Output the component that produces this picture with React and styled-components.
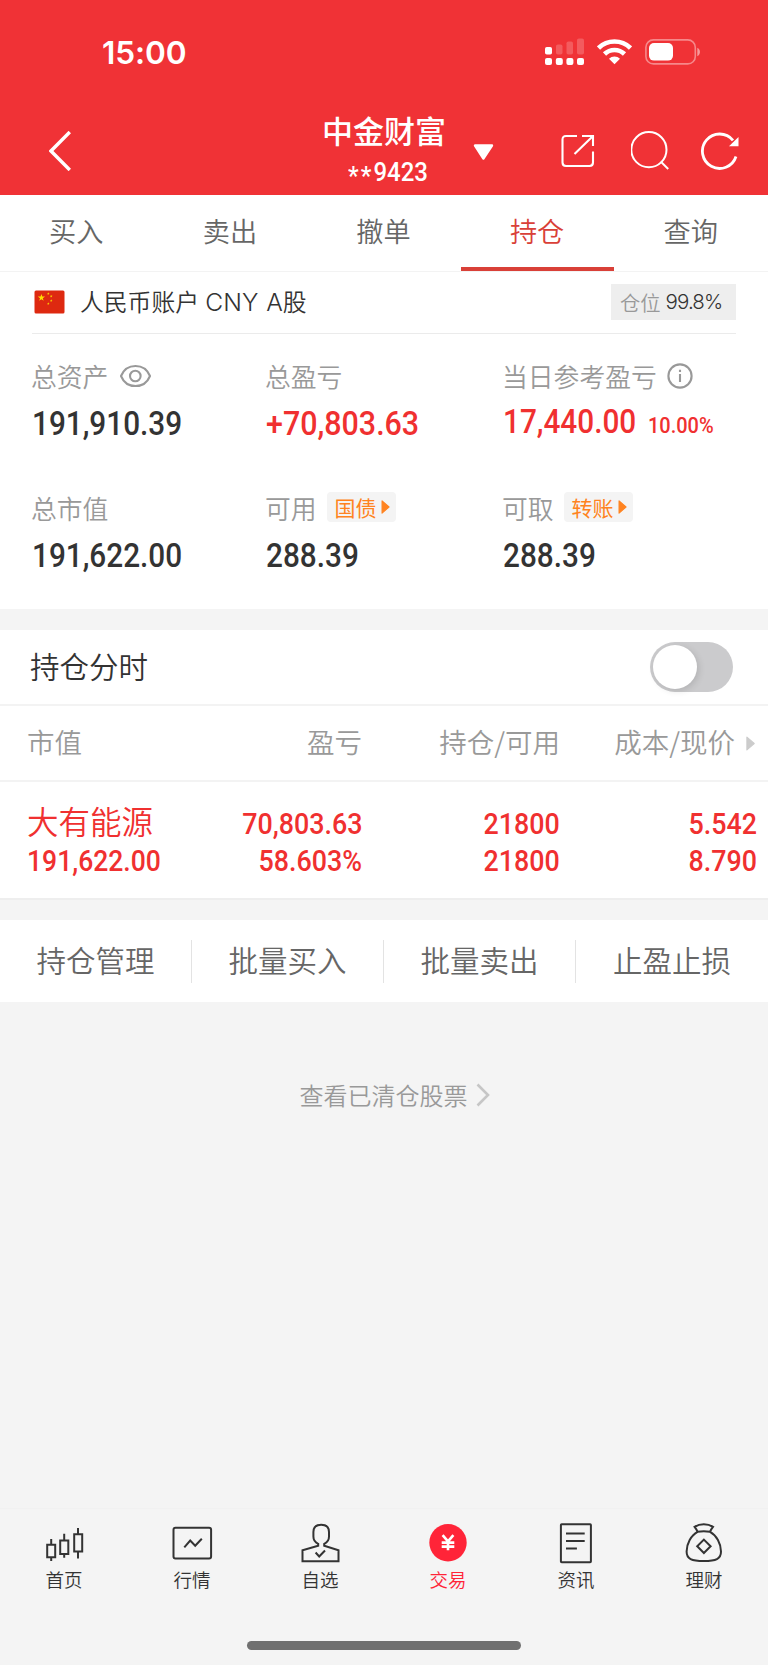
import styled, { createGlobalStyle } from "styled-components"

const GlobalStyle = createGlobalStyle`
    * {
        box-sizing: border-box;
    }

    body {
        margin: 0;
        background: #f4f4f4;
        font-family: "Noto Sans CJK SC", "Noto Sans", sans-serif;
        font-weight: 350;
        color: #333;
    }

    svg {
        display: block;
        flex: none;
    }
`

const Screen = styled.div`
    display: flex;
    flex-direction: column;

    width: 768px;
    height: 1665px;
    overflow: hidden;

    background-color: #f4f4f4;
`

/* narrow figures, used for every amount */
const Num = styled.span`
    display: inline-block;

    font-family: Roboto, sans-serif;
    font-size: ${props => props.$size || 33.8}px;
    font-weight: 500;
    line-height: 1;
    white-space: nowrap;

    transform: scaleX(${props => props.$sx || 0.88});
    transform-origin: ${props => props.$origin || "left"} center;
`

const Rate = styled(Num)`
    margin-left: -6px;
`

const Header = styled.header`
    height: 195px;
    flex: none;

    background-color: #f03236;
    color: #fff;
`

const StatusBar = styled.div`
    display: flex;
    align-items: center;

    height: 104px;
    padding: 0 67px 0 102px;
`

const Clock = styled.span`
    flex: 1;

    font-family: Inter, sans-serif;
    font-size: 31.6px;
    font-weight: 600;
    letter-spacing: -0.1px;
`

const StatusIcons = styled.div`
    display: flex;
    align-items: center;
    gap: 13px;
`

const NavBar = styled.div`
    display: grid;
    grid-template-columns: 274px 122px 28px 88px 70px 70px 38px;
    align-items: center;

    height: 91px;
    padding: 2px 0 0 49px;
`

const Account = styled.div`
    display: flex;
    flex-direction: column;
    align-items: center;
`

const Broker = styled.div`
    font-size: 31px;
    font-weight: 500;
    line-height: 38px;
    white-space: nowrap;
`

const AccountNo = styled.div`
    display: flex;
    align-items: center;

    height: 42px;
    margin-left: 8px;
    padding-top: 10px;
`

const Stars = styled.span`
    letter-spacing: 2.2px;
    vertical-align: -4px;
`

const Tabs = styled.nav`
    display: grid;
    grid-template-columns: repeat(5, 1fr);

    height: 77px;
    flex: none;

    background-color: #fff;
    border-bottom: 1px solid #f3f3f3;
`

const Tab = styled.div`
    padding: 15px 1px 0 0;

    font-size: 27.2px;
    line-height: 40px;
    text-align: center;
    color: ${props => props.$active ? "#d94038" : "#666"};

    border-bottom: 4px solid ${props => props.$active ? "#d94038" : "transparent"};
`

const Panel = styled.section`
    flex: none;
    height: ${props => props.$height}px;
    padding: 0 32px;

    background-color: #fff;
`

const AccountRow = styled.div`
    display: flex;
    align-items: center;

    height: 62px;
    padding: 0 0 2px 2px;

    border-bottom: 1px solid #ebebeb;
`

const AccountName = styled.div`
    flex: 1;
    margin-left: 15px;

    font-size: 23.8px;
    line-height: 34px;
    word-spacing: 1px;

    span {
        font-family: Inter, sans-serif;
        font-size: 24.6px;
        font-weight: 300;
    }
`

const Position = styled.div`
    display: flex;
    align-items: center;
    gap: 5px;

    width: 125px;
    height: 36px;
    padding-left: 9px;

    background-color: #eee;
    font-size: 20.3px;
    color: #999;

    span {
        font-family: Inter, sans-serif;
        font-size: 20.5px;
        font-weight: 300;
        letter-spacing: -0.9px;
        color: #333;
    }
`

const Summary = styled.div`
    display: grid;
    grid-template-columns: 234px 237px 1fr;
    grid-template-rows: 132px 120px;

    padding-top: 24px;
`

const Label = styled.div`
    display: flex;
    align-items: center;

    height: 34px;
    margin-left: -1px;

    font-size: 25.8px;
    white-space: nowrap;
    color: #999;
`

const Value = styled.div`
    display: flex;
    align-items: baseline;

    margin-top: ${props => props.$top || 15}px;
    color: ${props => props.$up ? "#f03030" : "#333"};
`

const Chip = styled.span`
    display: flex;
    align-items: center;
    gap: 4px;

    height: 30px;
    margin: 0 0 0 10px;
    padding: 0 6px 0 8px;

    border-radius: 4px;
    background-color: #f4f4f4;
    font-size: 21px;
    font-weight: 400;
    line-height: 28px;
    color: #ff8320;
`

const Gap = styled.div`
    flex: none;
    height: ${props => props.$height}px;
    border-top: 2px solid ${props => props.$line || "#f4f4f4"};
`

const SwitchRow = styled.div`
    display: flex;
    align-items: center;
    justify-content: space-between;

    height: 76px;
    flex: none;
    padding: 0 35px 0 30px;

    background-color: #fff;
    border-bottom: 2px solid #f3f3f3;
`

const SwitchLabel = styled.span`
    padding-bottom: 4px;
    font-size: 29.5px;
`

const Switch = styled.div`
    width: 83px;
    height: 50px;
    padding: 3px;

    border-radius: 25px;
    background-color: #cbcbcd;
`

const Knob = styled.div`
    width: 44px;
    height: 44px;

    border-radius: 50%;
    background-color: #fff;
    box-shadow: 2px 2px 7px rgb(0 0 0 / 12%);
`

const Columns = styled.div`
    display: grid;
    grid-template-columns: 170px 165px 198px 197px;

    flex: none;
    height: ${props => props.$height}px;
    padding-left: 27px;

    background-color: #fff;
`

const HeadColumns = styled(Columns)`
    align-items: center;

    padding-bottom: 4px;
    border-bottom: 2px solid #f3f3f3;
    font-size: 27.5px;
    line-height: 40px;
    white-space: nowrap;
    color: #999;

    svg {
        margin: 5px 2px 0 0;
    }
`

const Head = styled.div`
    display: flex;
    align-items: center;
    justify-content: ${props => props.$left ? "flex-start" : "flex-end"};
    gap: 11px;
`

const Cell = styled.div`
    display: flex;
    flex-direction: column;
    align-items: ${props => props.$left ? "flex-start" : "flex-end"};

    padding-top: 23px;
    color: #f03030;
`

const Line = styled.div`
    display: flex;
    align-items: center;

    height: 37px;
`

const Stock = styled(Line)`
    padding-bottom: 7px;

    font-size: 31.5px;
    white-space: nowrap;
`

const Actions = styled.div`
    display: grid;
    grid-template-columns: repeat(4, 1fr);
    align-items: center;

    flex: none;
    height: 82px;

    background-color: #fff;
`

const Action = styled.div`
    height: 43px;

    border-right: ${props => props.$last ? "none" : "1px solid #e3e3e3"};
    font-size: 29.5px;
    line-height: 39px;
    text-align: center;
    color: #666;
`

const ClearedLink = styled.div`
    display: flex;
    align-items: center;
    justify-content: center;
    gap: 8px;

    flex: none;
    height: 36px;
    margin-top: 75px;
    padding-left: 21px;

    font-size: 24px;
    line-height: 34px;
    color: #999;
`

const BottomBar = styled.footer`
    display: grid;
    grid-template-columns: repeat(6, 1fr);

    flex: none;
    height: 133px;
    margin-top: auto;
    padding-top: 12px;

    border-top: 1px solid #f1f1f1;
`

const BottomItem = styled.div`
    display: flex;
    flex-direction: column;
    align-items: center;

    font-size: 18.5px;
    line-height: 29px;
    color: ${props => props.$active ? "#ff2438" : "#333"};
`

const HomeIndicator = styled.div`
    flex: none;
    width: 274px;
    height: 9px;
    margin: 0 auto 15px 247px;

    border-radius: 5px;
    background-color: #707070;
`

const Signal = () => (
    <svg width="39" height="28" viewBox="0 0 39 28" fill="#fff">
        <rect x="0" y="9" width="7" height="7.5" rx="1.8" />
        <rect x="11" y="6.5" width="6.5" height="10" rx="1.8" opacity=".2" />
        <rect x="21.5" y="3.5" width="6.5" height="13" rx="1.8" opacity=".2" />
        <rect x="32" y="0.5" width="7" height="16" rx="1.8" opacity=".2" />
        {[0, 10.8, 21.4, 32].map(x => (
            <rect key={x} x={x} y="20" width="7" height="7" rx="2" />
        ))}
    </svg>
)

const Wifi = () => (
    <svg width="35" height="26" viewBox="0 0 35 26">
        <g fill="none" stroke="#fff" strokeWidth="4.6">
            <path d="M1.5 9 A23 23 0 0 1 33.5 9" />
            <path d="M7.5 15 A14.4 14.4 0 0 1 27.5 15" />
        </g>
        <path d="M17.5 25.3 L12 19.8 A8 8 0 0 1 23 19.8 Z" fill="#fff" />
    </svg>
)

const Battery = () => (
    <svg width="56" height="26" viewBox="0 0 56 26">
        <rect x="0.9" y="0.9" width="49.4" height="24" rx="7.5" fill="none" stroke="#fff" strokeOpacity=".42" strokeWidth="1.6" />
        <rect x="4" y="4" width="24" height="17.6" rx="5" fill="#fff" />
        <path d="M52.3 8.8 C55.8 10 55.8 16 52.3 17.2 Z" fill="#fff" opacity=".5" />
    </svg>
)

const BackIcon = () => (
    <svg width="22" height="40" viewBox="0 0 22 40" fill="none" stroke="#fff" strokeWidth="3.4">
        <path d="M20.8 1 L2 20 L20.8 39" />
    </svg>
)

const DropIcon = styled(({ className }) => (
    <svg className={className} width="21" height="17" viewBox="0 0 21 17">
        <path d="M2 1.5 H19 L10.4 14.5 Z" fill="#fff" stroke="#fff" strokeWidth="2.4" strokeLinejoin="round" />
    </svg>
))`
    margin-top: 3px;
`

const ShareIcon = () => (
    <svg width="34" height="34" viewBox="0 0 34 34" fill="none" stroke="#fff" strokeWidth="2.1">
        <path d="M16 2 H5 Q1.5 2 1.5 5.5 V28.5 Q1.5 32 5 32 H28.5 Q32 32 32 28.5 V17.5" />
        <path d="M21 2 H32 V12 M32 2 L13.5 20" />
    </svg>
)

const SearchIcon = () => (
    <svg width="40" height="40" viewBox="0 0 40 40" fill="none" stroke="#fff" strokeWidth="2">
        <circle cx="17.9" cy="18.7" r="17.6" />
        <path d="M29.7 30.5 L37.2 38" />
    </svg>
)

const RefreshIcon = () => (
    <svg width="38" height="39" viewBox="0 0 38 39">
        <path d="M35 25.5 A17.2 17.2 0 1 1 32 9.4" fill="none" stroke="#fff" strokeWidth="2.8" />
        <path d="M37.5 6 V15.3 H28 Z" fill="#fff" />
    </svg>
)

const STAR = "0,-1 .23,-.31 .95,-.31 .36,.12 .59,.81 0,.38 -.59,.81 -.36,.12 -.95,-.31 -.23,-.31"

const Flag = () => (
    <svg width="31" height="24" viewBox="0 0 31 24">
        <rect x="0.5" y="0.5" width="30" height="23" rx="1.5" fill="#de2910" />
        <g fill="#ffde00">
            <polygon points={STAR} transform="translate(7.4 7.7) scale(3.8)" />
            <polygon points={STAR} transform="translate(14.3 3.6) scale(1.4)" />
            <polygon points={STAR} transform="translate(17.2 6.3) scale(1.4)" />
            <polygon points={STAR} transform="translate(17.2 10.6) scale(1.4)" />
            <polygon points={STAR} transform="translate(14.3 13.6) scale(1.4)" />
        </g>
    </svg>
)

const EyeIcon = styled(({ className }) => (
    <svg className={className} width="31" height="24" viewBox="0 0 31 24" fill="none" stroke="#999" strokeWidth="2.1">
        <path d="M1 12 C6.5 -1.4 24.5 -1.4 30 12 C24.5 25.4 6.5 25.4 1 12 Z" strokeLinejoin="round" />
        <circle cx="15.3" cy="12" r="5.3" />
    </svg>
))`
    margin: 1px 0 0 12px;
`

const InfoIcon = styled(({ className }) => (
    <svg className={className} width="26" height="26" viewBox="0 0 26 26" fill="none" stroke="#999" strokeWidth="2.1">
        <circle cx="13" cy="13" r="11.6" />
        <path d="M13 11 V19 M13 6.8 V9" />
    </svg>
))`
    margin: 1px 0 0 10px;
`

const PlayIcon = ({ width, height, color }) => (
    <svg width={width} height={height} viewBox="0 0 8 13">
        <path d="M0.8 0.8 L7.3 6.5 L0.8 12.2 Z" fill={color} stroke={color} strokeLinejoin="round" />
    </svg>
)

const ChevronIcon = () => (
    <svg width="14" height="24" viewBox="0 0 14 24" fill="none" stroke="#c6c6c6" strokeWidth="2.6">
        <path d="M1.5 1.5 L12 12 L1.5 22.5" />
    </svg>
)

const icons = {
    home: (
        <>
            <path d="M5.2 23.8 H13.2 V36.2 H5.2 Z M9.2 18 V23.8 M9.2 36.2 V40" />
            <path d="M18.2 19.5 H26.3 V33 H18.2 Z M22.2 12.7 V19.5 M22.2 33 V36.8" />
            <path d="M32.2 13.2 H40.2 V30.5 H32.2 Z M36 7 V13.2 M36 30.5 V37.5" />
        </>
    ),
    market: (
        <>
            <rect x="3.5" y="6.8" width="37.6" height="30.6" rx="2" />
            <path d="M14.3 26.3 L20.2 19.5 L25.2 24.7 L31.8 17.7" />
        </>
    ),
    watch: (
        <>
            <path d="M20.2 24.7 V22.8 C17.5 21.6 15.4 19.4 15.4 15.5 V11 C15.4 6 18.3 3.7 23.2 3.7 C28.1 3.7 31 6 31 11 V15.5 C31 19.4 28.9 21.6 26.2 22.8 V24.7 L40.5 29.3 V40.2 H4.5 V29.3 Z" />
            <path d="M17.6 31.5 L21.2 35.5 L27 29.5" />
        </>
    ),
    trade: (
        <>
            <circle cx="22" cy="21.7" r="18.7" fill="#ff2438" stroke="none" />
            <path d="M16.6 14.2 L22 20.4 L27.4 14.2 M22 20 V29.3 M15.7 21.6 H28.3 M15.7 25.6 H28.3" stroke="#fff" strokeWidth="2.6" />
        </>
    ),
    news: (
        <>
            <rect x="6.9" y="3.3" width="30" height="38" rx="0.8" />
            <path d="M12 12.4 H30.7 M12 20 H30.7 M12 27.5 H22.9" />
        </>
    ),
    wealth: (
        <>
            <path d="M15.6 10.8 C14.8 8.8 13.8 7.3 12.6 5.8 C18 2.4 25.6 2.4 31 5.8 C29.8 7.3 28.8 8.8 28 10.8" />
            <path d="M15.6 10.8 Q21.8 9.7 28 10.8 C34.5 14.2 39 22.5 39 30.5 C39 38 34 40 21.8 40 C9.6 40 4.6 38 4.6 30.5 C4.6 22.5 9.1 14.2 15.6 10.8 Z" />
            <path d="M21.9 18.6 L28.6 25.3 L21.9 32 L15.2 25.3 Z" />
        </>
    ),
}

const tabs = ["买入", "卖出", "撤单", "持仓", "查询"]
const actions = ["持仓管理", "批量买入", "批量卖出", "止盈止损"]
const bottomItems = [
    { label: "首页", icon: "home" },
    { label: "行情", icon: "market" },
    { label: "自选", icon: "watch" },
    { label: "交易", icon: "trade" },
    { label: "资讯", icon: "news" },
    { label: "理财", icon: "wealth" },
]
const figures = [
    ["70,803.63", "58.603%"],
    ["21800", "21800"],
    ["5.542", "8.790"],
]

export default function App() {
    return (
        <Screen>
            <GlobalStyle />

            <Header>
                <StatusBar>
                    <Clock>15:00</Clock>
                    <StatusIcons>
                        <Signal />
                        <Wifi />
                        <Battery />
                    </StatusIcons>
                </StatusBar>

                <NavBar>
                    <BackIcon />
                    <Account>
                        <Broker>中金财富</Broker>
                        <AccountNo>
                            <Num $size={25.8} $sx={0.93} $origin="center"><Stars>**</Stars>9423</Num>
                        </AccountNo>
                    </Account>
                    <span />
                    <DropIcon />
                    <ShareIcon />
                    <SearchIcon />
                    <RefreshIcon />
                </NavBar>
            </Header>

            <Tabs>
                {tabs.map(tab => (
                    <Tab key={tab} $active={tab === "持仓"}>{tab}</Tab>
                ))}
            </Tabs>

            <Panel $height={337}>
                <AccountRow>
                    <Flag />
                    <AccountName>人民币账户 <span>CNY A</span>股</AccountName>
                    <Position>仓位<span>99.8%</span></Position>
                </AccountRow>

                <Summary>
                    <div>
                        <Label>总资产<EyeIcon /></Label>
                        <Value><Num>191,910.39</Num></Value>
                    </div>
                    <div>
                        <Label>总盈亏</Label>
                        <Value $up><Num $sx={0.9}>+70,803.63</Num></Value>
                    </div>
                    <div>
                        <Label>当日参考盈亏<InfoIcon /></Label>
                        <Value $up $top={13}>
                            <Num>17,440.00</Num>
                            <Rate $size={21.7} $sx={0.92}>10.00%</Rate>
                        </Value>
                    </div>
                    <div>
                        <Label>总市值</Label>
                        <Value><Num>191,622.00</Num></Value>
                    </div>
                    <div>
                        <Label>可用<Chip>国债<PlayIcon width={9} height={14} color="#ff8320" /></Chip></Label>
                        <Value><Num>288.39</Num></Value>
                    </div>
                    <div>
                        <Label>可取<Chip>转账<PlayIcon width={9} height={14} color="#ff8320" /></Chip></Label>
                        <Value><Num>288.39</Num></Value>
                    </div>
                </Summary>
            </Panel>

            <Gap $height={21} />

            <SwitchRow>
                <SwitchLabel>持仓分时</SwitchLabel>
                <Switch><Knob /></Switch>
            </SwitchRow>

            <HeadColumns $height={76}>
                <Head $left>市值</Head>
                <Head>盈亏</Head>
                <Head>持仓/可用</Head>
                <Head>成本/现价<PlayIcon width={9} height={17} color="#ccc" /></Head>
            </HeadColumns>

            <Columns $height={116}>
                <Cell $left>
                    <Stock>大有能源</Stock>
                    <Line><Num $size={29.8} $sx={0.89}>191,622.00</Num></Line>
                </Cell>
                {figures.map(([top, bottom]) => (
                    <Cell key={top}>
                        <Line><Num $size={29.8} $sx={0.9} $origin="right">{top}</Num></Line>
                        <Line><Num $size={29.8} $sx={0.9} $origin="right">{bottom}</Num></Line>
                    </Cell>
                ))}
            </Columns>

            <Gap $height={22} $line="#eeeeee" />

            <Actions>
                {actions.map((action, i) => (
                    <Action key={action} $last={i === actions.length - 1}>{action}</Action>
                ))}
            </Actions>

            <ClearedLink>
                查看已清仓股票
                <ChevronIcon />
            </ClearedLink>

            <BottomBar>
                {bottomItems.map(({ label, icon }) => (
                    <BottomItem key={icon} $active={icon === "trade"}>
                        <svg width="44" height="44" viewBox="0 0 44 44" fill="none" stroke="#333" strokeWidth="2">
                            {icons[icon]}
                        </svg>
                        {label}
                    </BottomItem>
                ))}
            </BottomBar>
            <HomeIndicator />
        </Screen>
    )
}
